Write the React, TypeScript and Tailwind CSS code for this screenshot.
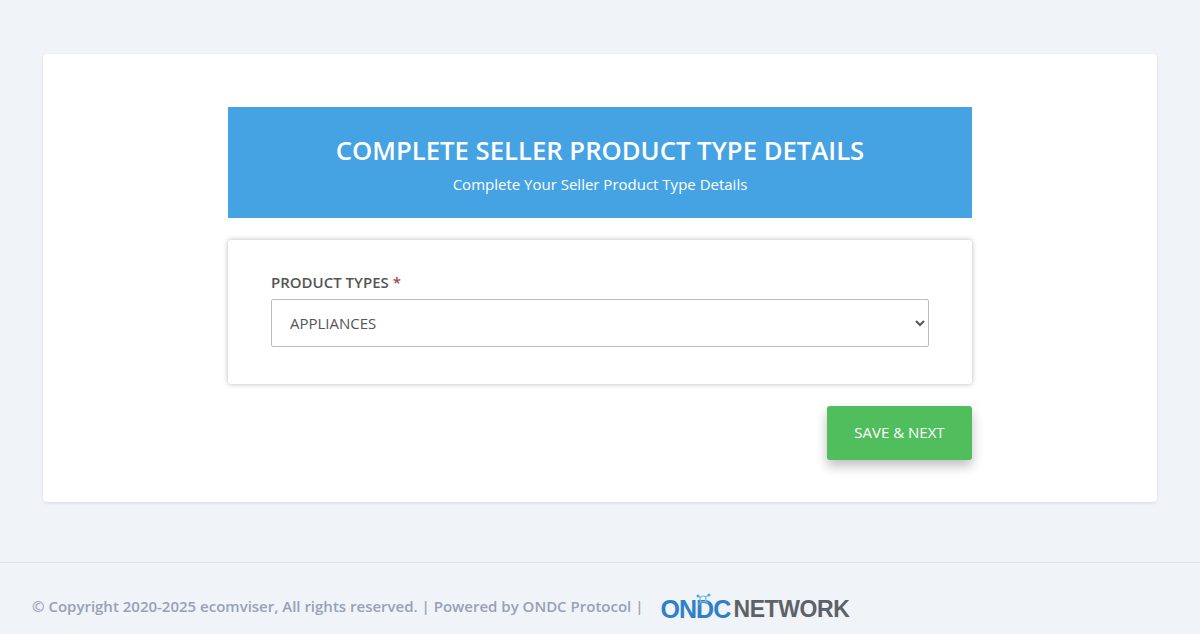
export default function App() {
  return (
    <div className="flex h-[634px] flex-col overflow-hidden bg-[#f0f3f8] font-['Open_Sans',sans-serif]">
      <main className="h-[562px] px-[43px] pt-[54px]">
        <section className="flex h-[448px] flex-col items-center rounded bg-white pt-[53px] shadow-[0_1px_3px_rgba(60,70,90,0.14)]">
          <div className="flex w-[744px] flex-col">
            <header className="flex h-[111px] flex-col items-center bg-[#45a3e3] pt-[26px] text-white">
              <h1 className="text-[25.7px] leading-[36px] font-semibold">COMPLETE SELLER PRODUCT TYPE DETAILS</h1>
              <p className="mt-[4px] text-[15px] leading-[22px]">Complete Your Seller Product Type Details</p>
            </header>
            <div className="mt-[22px] h-[144px] rounded-[3px] bg-white px-[43px] pt-[31px] shadow-[0_0_5px_rgba(0,0,0,0.3)]">
              <label className="block text-[15px] leading-[22px] font-semibold text-[#555555]">
                PRODUCT TYPES <span className="text-[#a94442]">*</span>
              </label>
              <select className="mt-[6px] block h-[48px] w-full rounded-[2px] border border-[#bdbdbd] bg-white pl-[14px] pr-[4px] text-[15px] text-[#555555]">
                <option>APPLIANCES</option>
              </select>
            </div>
            <div className="mt-[22px] flex justify-end">
              <button className="h-[54px] w-[145px] rounded-[3px] bg-[#51be5d] pb-[2px] text-[15px] text-white shadow-[0_6px_12px_rgba(0,0,0,0.25)]">
                SAVE &amp; NEXT
              </button>
            </div>
          </div>
        </section>
      </main>
      <footer className="flex h-[72px] items-center border-t border-[#dfe3ea] pl-[32px] pt-[16px] text-[15px] font-semibold text-[#98a1b5]">
        <span>© Copyright 2020-2025 ecomviser, All rights reserved. | Powered by ONDC Protocol |</span>
        <div className="ml-[17px] mt-[5px] flex items-center">
          <span className="relative font-['Liberation_Sans',sans-serif] text-[25px] leading-[24px] font-bold tracking-[-0.9px] text-[#2f80c4]">
            ONDC
            <svg className="absolute left-[31px] top-[-6px]" width="26" height="18" viewBox="0 0 26 18">
              <g fill="none" stroke="#7ab6e0" strokeWidth="1.2">
                <circle cx="12" cy="8" r="3" />
                <path d="M7 5l3 2M18 4l-4 2M8 13l2-3M17 12l-3-2" />
              </g>
              <circle cx="7" cy="5" r="1.5" fill="#5ba5d8" />
              <circle cx="18" cy="4" r="1.5" fill="#5ba5d8" />
              <circle cx="8" cy="13" r="1.3" fill="#5ba5d8" />
            </svg>
          </span>
          <span className="ml-[3px] font-['Liberation_Sans',sans-serif] text-[23px] leading-[24px] font-bold tracking-[-0.4px] text-[#5c6268]">NETWORK</span>
        </div>
      </footer>
    </div>
  );
}
